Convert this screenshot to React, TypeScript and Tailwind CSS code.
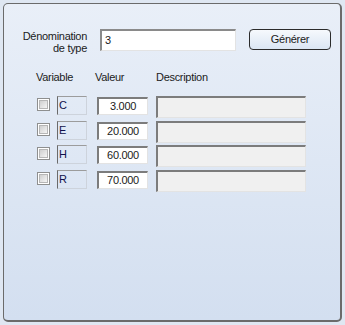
import {FC, memo} from 'react';

const rows = [
  {name: 'C', value: '3.000'},
  {name: 'E', value: '20.000'},
  {name: 'H', value: '60.000'},
  {name: 'R', value: '70.000'},
];

const font = "font-['Liberation_Sans',Arial,sans-serif] text-[11px] tracking-[-0.3px] text-[#1b1b1b]";

const Checkbox: FC = () => (
  <div className="mt-[2px] h-[13px] w-[13px] border border-[#8e8f8f] bg-white p-[1px]">
    <div className="h-full w-full border border-[#b6b6b6] bg-gradient-to-br from-[#cfcfcf] to-[#f5f5f5]" />
  </div>
);

const App: FC = memo(() => (
  <div className={`h-[325px] w-[345px] bg-[#dfe7f2] p-[3px] ${font}`}>
    <div className="flex h-[319px] w-[339px] flex-col rounded-[5px] border border-b-2 border-r-2 border-[#6b6b6b] bg-gradient-to-b from-[#e9eff8] to-[#d3dff0]">
      {/* top row */}
      <div className="mt-[25px] flex items-start">
        <div className="mt-[1px] w-[83px] text-right leading-[12px]">
          Dénomination
          <br />
          de type
        </div>
        <div className="ml-[13px] flex h-[22px] w-[136px] items-center border-l-2 border-t-2 border-b border-r border-l-[#8a8a8a] border-t-[#8a8a8a] border-b-[#e3e3e3] border-r-[#e3e3e3] bg-white pl-[3px]">
          3
        </div>
        <button className="ml-[13px] flex h-[21px] w-[82px] items-center justify-center rounded-[4px] border border-[#2b2b2b] bg-gradient-to-b from-[#f6f9fd] to-[#dbe6f3] text-[#1b1b1b]">
          Générer
        </button>
      </div>

      {/* headers */}
      <div className="mt-[17px] flex leading-[13px]">
        <span className="ml-[32px] w-[59px]">Variable</span>
        <span className="w-[61px]">Valeur</span>
        <span>Description</span>
      </div>

      {/* rows */}
      <div className="mt-[12px] flex flex-col gap-[2.5px]">
        {rows.map(({name, value}) => (
          <div key={name} className="flex h-[22px] items-start">
            <div className="ml-[33px]">
              <Checkbox />
            </div>
            <div className="ml-[7px] h-[19px] w-[30px] border border-l-[#6a6a6a] border-t-[#9c9c9c] border-r-[#cdd3dc] border-b-[#cdd3dc] pl-[1px] pt-[2px] leading-[13px] text-[#10104a]">
              {name}
            </div>
            <div className="ml-[10px] mt-[1px] flex h-[18px] w-[51px] items-center justify-center border-l-2 border-t-2 border-b border-r border-l-[#7c7c7c] border-t-[#7c7c7c] border-b-[#e3e3e3] border-r-[#e3e3e3] bg-white">
              {value}
            </div>
            <div className="ml-[8px] h-[22px] w-[150px] border-l-2 border-t-2 border-b border-r border-l-[#7c7c7c] border-t-[#7c7c7c] border-b-[#e3e3e3] border-r-[#e3e3e3] bg-[#f0f0f0]" />
          </div>
        ))}
      </div>
    </div>
  </div>
));

App.displayName = 'App';
export default App;
